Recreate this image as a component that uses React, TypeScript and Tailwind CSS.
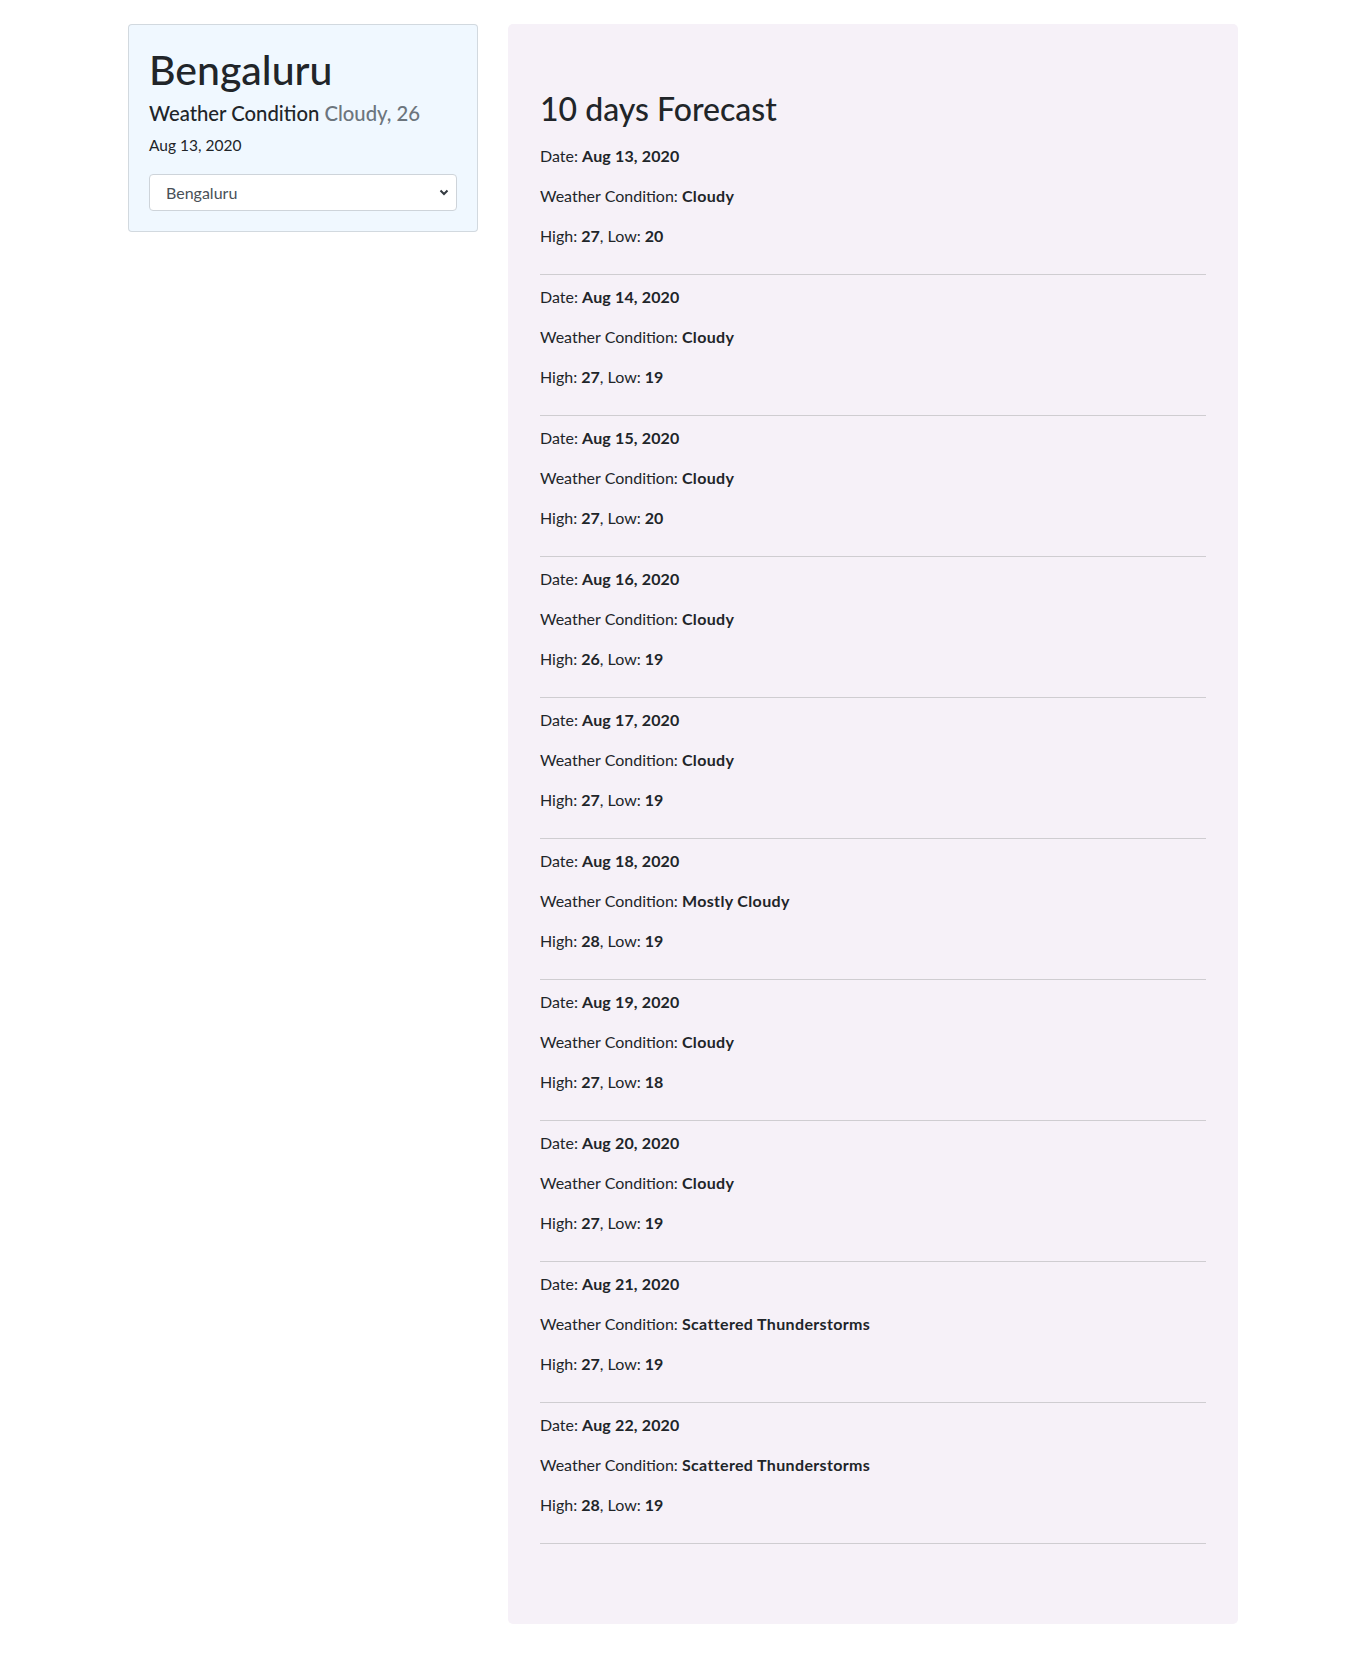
import React from "react";

type Day = { date: string; cond: string; high: number; low: number };

const days: Day[] = [
  { date: "Aug 13, 2020", cond: "Cloudy", high: 27, low: 20 },
  { date: "Aug 14, 2020", cond: "Cloudy", high: 27, low: 19 },
  { date: "Aug 15, 2020", cond: "Cloudy", high: 27, low: 20 },
  { date: "Aug 16, 2020", cond: "Cloudy", high: 26, low: 19 },
  { date: "Aug 17, 2020", cond: "Cloudy", high: 27, low: 19 },
  { date: "Aug 18, 2020", cond: "Mostly Cloudy", high: 28, low: 19 },
  { date: "Aug 19, 2020", cond: "Cloudy", high: 27, low: 18 },
  { date: "Aug 20, 2020", cond: "Cloudy", high: 27, low: 19 },
  { date: "Aug 21, 2020", cond: "Scattered Thunderstorms", high: 27, low: 19 },
  { date: "Aug 22, 2020", cond: "Scattered Thunderstorms", high: 28, low: 19 },
];

export default function App() {
  return (
    <div
      className="min-h-[1656px] bg-white text-[#212529]"
      style={{ fontFamily: '"Segoe UI", Lato, "Liberation Sans", sans-serif' }}
    >
      <div className="mx-auto w-[1140px] pt-6 px-[15px] flex gap-[30px] items-start">
        <div className="w-[350px] shrink-0 bg-[#f0f8ff] border border-black/[0.125] rounded-[4px] p-5">
          <h1 className="text-[41px] leading-[48px] font-medium mt-[1px] mb-[7px]">Bengaluru</h1>
          <h5 className="text-[20.3px] leading-[24px] font-medium mb-2">
            Weather Condition <span className="text-[#6c757d]">Cloudy, 26</span>
          </h5>
          <p className="text-[15.5px] leading-[24px] mb-[17px]">Aug 13, 2020</p>
          <div className="relative">
            <select
              className="w-full h-[37px] appearance-none bg-white border border-[#ced4da] rounded-[4px] pl-4 pr-8 text-[16px] text-[#495057] outline-none"
              defaultValue="Bengaluru"
            >
              <option>Bengaluru</option>
            </select>
            <svg
              className="absolute right-[8px] top-[15px] pointer-events-none"
              width="10"
              height="7"
              viewBox="0 0 10 7"
            >
              <path d="M1.5 1.5 L5 5 L8.5 1.5" fill="none" stroke="#343a40" strokeWidth="2" />
            </svg>
          </div>
        </div>
        <div className="flex-1 bg-[#f6f1f8] rounded-[5px] px-8 pt-16 pb-[70px]">
          <h2 className="text-[32px] leading-[38px] font-medium mt-[2px] mb-[16px]">10 days Forecast</h2>
          {days.map((d) => (
            <div key={d.date}>
              <p className="text-[16px] leading-[24px] mb-4">
                Date: <b className="font-bold tracking-[0.15px]">{d.date}</b>
              </p>
              <p className="text-[16px] leading-[24px] mb-4">
                Weather Condition: <b className="font-bold tracking-[0.35px]">{d.cond}</b>
              </p>
              <p className="text-[16px] leading-[24px]">
                High: <b className="font-bold">{d.high}</b>, Low: <b className="font-bold">{d.low}</b>
              </p>
              <hr className="mt-[26px] mb-[10px] border-0 border-t border-[#cfcdd1]" />
            </div>
          ))}
        </div>
      </div>
    </div>
  );
}
